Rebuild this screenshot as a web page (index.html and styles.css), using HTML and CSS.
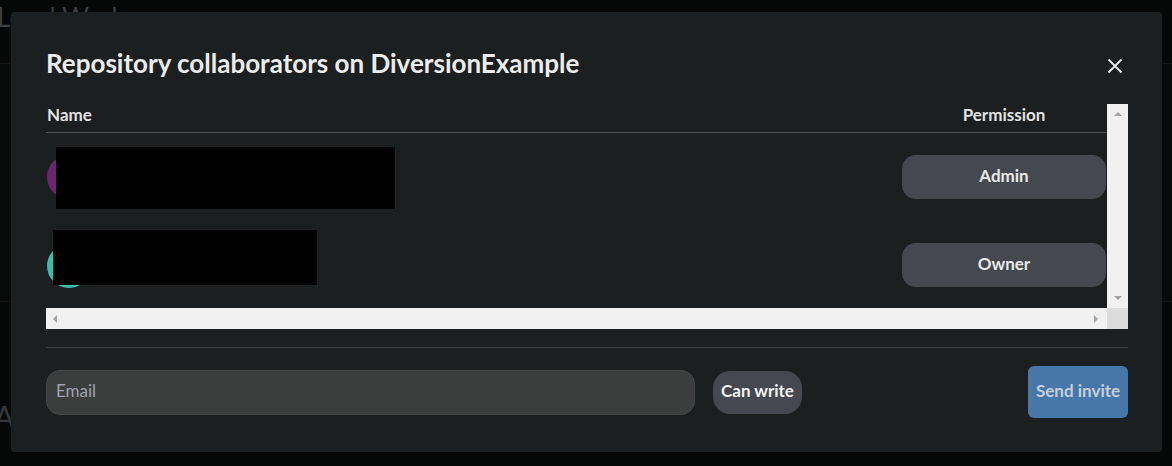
FILE: index.html
```html
<!DOCTYPE html>
<html lang="en">
<head>
<meta charset="utf-8">
<title>Repository collaborators</title>
<link rel="stylesheet" href="styles.css">
</head>
<body>
<div class="page">
  <div class="page-top"><span class="page-title">Local Workspace</span></div>
  <div class="page-mid"></div>
  <div class="page-bottom"><span class="page-letter">A</span></div>
</div>

<div class="modal" role="dialog">
  <div class="modal-head">
    <h1 class="modal-title">Repository collaborators on DiversionExample</h1>
    <button class="close" aria-label="Close">
      <svg width="16" height="16" viewBox="0 0 16 16"><path d="M1.5 1.5 L14.5 14.5 M14.5 1.5 L1.5 14.5" stroke="#e8e8e8" stroke-width="1.8" fill="none"/></svg>
    </button>
  </div>

  <div class="scroll">
    <div class="viewport">
      <div class="thead">
        <span class="th">Name</span>
        <span class="th th-perm">Permission</span>
      </div>
      <div class="row">
        <span class="avatar avatar-purple"></span>
        <span class="redact redact-1"></span>
        <button class="perm">Admin</button>
      </div>
      <div class="row">
        <span class="avatar avatar-teal"></span>
        <span class="redact redact-2"></span>
        <button class="perm">Owner</button>
      </div>
    </div>
    <div class="vbar">
      <span class="arrow arrow-up"></span>
      <span class="arrow arrow-down"></span>
    </div>
    <div class="hbar">
      <span class="arrow arrow-left"></span>
      <span class="arrow arrow-right"></span>
    </div>
    <div class="corner"></div>
  </div>

  <div class="divider"></div>

  <div class="invite">
    <input class="email" type="text" placeholder="Email">
    <button class="can-write">Can write</button>
    <button class="send">Send invite</button>
  </div>
</div>
</body>
</html>
```

FILE: styles.css
```css
* { box-sizing: border-box; }

html, body {
  margin: 0;
  padding: 0;
  width: 1172px;
  height: 466px;
  overflow: hidden;
  background: #060707;
  font-family: "Lato", "Noto Sans", sans-serif;
}

.page {
  height: 466px;
  display: flex;
  flex-direction: column;
}

.page-top {
  height: 64px;
  border-bottom: 1px solid #141616;
}

.page-title {
  display: block;
  margin-left: -3px;
  margin-top: 2px;
  font-size: 26px;
  color: #3c3f42;
  line-height: 30px;
}

.page-mid {
  height: 238px;
  border-bottom: 1px solid #121414;
  background: #080909;
}

.page-bottom {
  flex: 1;
  padding-top: 96px;
}

.page-letter {
  display: block;
  margin-left: -6px;
  font-size: 30px;
  color: #33373a;
}

.modal {
  position: absolute;
  left: 11px;
  top: 12px;
  width: 1151px;
  height: 440px;
  background: #1c1f20;
  border-radius: 4px;
  padding: 36px 34px 34px 35px;
  display: flex;
  flex-direction: column;
}

.modal-head {
  display: flex;
  align-items: flex-start;
  justify-content: space-between;
  height: 30px;
}

.modal-title {
  margin: 0;
  font-size: 26px;
  line-height: 30px;
  font-weight: 700;
  color: #ececec;
}

.close {
  border: 0;
  background: none;
  padding: 0;
  margin: 10px 5px 0 0;
  width: 16px;
  height: 16px;
  display: block;
}
.close svg { display: block; }

.scroll {
  margin-top: 26px;
  display: grid;
  grid-template-columns: 1061px 21px;
  grid-template-rows: 204px 21px;
}

.viewport {
  overflow: hidden;
}

.thead {
  display: flex;
  justify-content: space-between;
  height: 29px;
  padding: 1px 0 0 1px;
  border-bottom: 1px solid #4a4d4f;
}

.th {
  font-size: 17px;
  line-height: 20px;
  font-weight: 700;
  color: #e2e2e2;
}

.th-perm {
  width: 204px;
  margin-right: 1px;
  text-align: center;
}

.row {
  position: relative;
  height: 88px;
  display: flex;
  align-items: center;
  justify-content: space-between;
}

.avatar {
  width: 44px;
  height: 44px;
  border-radius: 50%;
  margin-left: 1px;
}
.avatar-purple { background: #6b2374; }
.avatar-teal { background: #3abcab; margin-top: 2px; }

.redact {
  position: absolute;
  background: #000;
}
.redact-1 { left: 10px; top: 14px; width: 339px; height: 62px; }
.redact-2 { left: 7px; top: 9px; width: 264px; height: 55px; }

.perm {
  width: 204px;
  height: 44px;
  margin-right: 1px;
  border: 0;
  border-radius: 14px;
  background: #45484f;
  color: #e9e9e9;
  font-family: "Lato", sans-serif;
  font-size: 17px;
  font-weight: 700;
  padding: 0 0 4px;
}

.vbar, .hbar {
  background: #f1f1f1;
  display: flex;
  justify-content: space-between;
  align-items: center;
}

.vbar {
  flex-direction: column;
  padding: 8px 0 8px;
}

.hbar {
  padding: 0 9px 0 7px;
}

.corner { background: #dcdcdc; }

.arrow {
  width: 0;
  height: 0;
  display: block;
}
.arrow-up {
  border-left: 4px solid transparent;
  border-right: 4px solid transparent;
  border-bottom: 4px solid #a3a3a3;
}
.arrow-down {
  border-left: 4px solid transparent;
  border-right: 4px solid transparent;
  border-top: 4px solid #a3a3a3;
}
.arrow-left {
  border-top: 4px solid transparent;
  border-bottom: 4px solid transparent;
  border-right: 4px solid #a3a3a3;
}
.arrow-right {
  border-top: 4px solid transparent;
  border-bottom: 4px solid transparent;
  border-left: 4px solid #a3a3a3;
}

.divider {
  margin-top: 18px;
  height: 1px;
  background: #3d4042;
}

.invite {
  margin-top: 18px;
  height: 52px;
  display: flex;
  align-items: center;
}

.email {
  width: 649px;
  height: 45px;
  border: 1px solid #464747;
  border-radius: 14px;
  background: #3c3d3d;
  padding: 0 9px 3px;
  font-family: "Lato", sans-serif;
  font-size: 17px;
  color: #e0e0e0;
  outline: none;
}
.email::placeholder { color: #a0a4ae; }

.can-write {
  margin-left: 18px;
  width: 89px;
  height: 43px;
  border: 0;
  border-radius: 17px;
  background: #45484f;
  color: #f2f2f2;
  font-family: "Lato", sans-serif;
  font-size: 17px;
  font-weight: 700;
  padding: 0 0 4px;
}

.send {
  margin-left: auto;
  width: 100px;
  height: 52px;
  border: 0;
  border-radius: 6px;
  background: #4677a8;
  color: #c6ced8;
  font-family: "Lato", sans-serif;
  font-size: 17px;
  font-weight: 700;
  padding: 0 0 4px;
}
```
